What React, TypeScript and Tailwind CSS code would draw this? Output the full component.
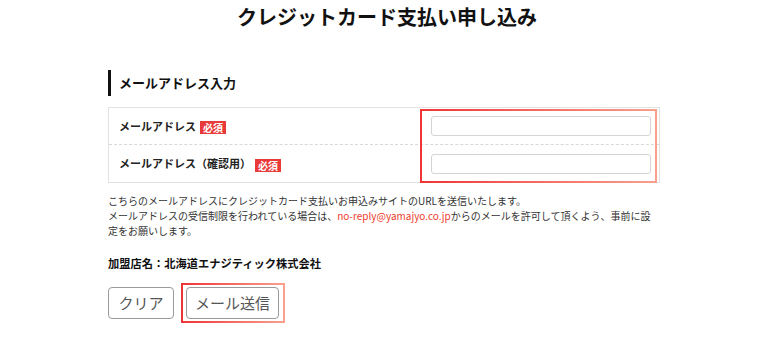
import React from 'react';

const Badge: React.FC = () => (
    <span className="inline-block ml-[4px] bg-[#e83a3a] text-white text-[10px] font-bold leading-[13px] px-[3px] align-middle">必須</span>
);

export default function App() {
    return (
        <div className="w-[774px] h-[351px] bg-white text-[#222] font-['Noto_Sans_CJK_JP','Noto_Sans',sans-serif]">
            <h1 className="pt-[4px] text-center text-[20px] font-bold leading-[26px] text-[#111]">
                クレジットカード支払い申し込み
            </h1>

            <div className="ml-[108px] w-[552px] mt-[40px]">
                <h2 className="border-l-[3px] border-[#111] pl-[8px] text-[13px] font-bold leading-[26px] text-[#111]">
                    メールアドレス入力
                </h2>

                <div className="relative mt-[11px] border border-[#e2e2e2]">
                    <div className="flex h-[37px] items-center border-b border-dashed border-[#d8d8d8]">
                        <div className="w-[312px] pl-[10px] text-[11px] font-bold">
                            メールアドレス<Badge />
                        </div>
                        <div className="flex-1 pl-[10px] pr-[8px]">
                            <input className="block w-full h-[20px] border border-[#d4d4d4] rounded-[3px] bg-white" />
                        </div>
                    </div>
                    <div className="flex h-[37px] items-center">
                        <div className="w-[312px] pl-[10px] text-[11px] font-bold">
                            メールアドレス（確認用）<Badge />
                        </div>
                        <div className="flex-1 pl-[10px] pr-[8px]">
                            <input className="block w-full h-[20px] border border-[#d4d4d4] rounded-[3px] bg-white" />
                        </div>
                    </div>
                    <div className="pointer-events-none absolute left-[311px] top-[1px] right-[2px] bottom-[-1px] border-2 [border-image:linear-gradient(to_right,#ef3535,#f9a08c)_1]" />
                </div>

                <p className="mt-[10px] text-[10px] leading-[15px] text-[#333]">
                    こちらのメールアドレスにクレジットカード支払いお申込みサイトのURLを送信いたします。<br />
                    メールアドレスの受信制限を行われている場合は、<span className="text-[#ef3b2c]">no-reply@yamajyo.co.jp</span>からのメールを許可して頂くよう、事前に設定をお願いします。
                </p>

                <p className="mt-[17px] text-[11.25px] font-bold leading-[16px] text-[#111]">
                    加盟店名：北海道エナジティック株式会社
                </p>

                <div className="mt-[16px] flex gap-[12px]">
                    <button className="h-[32px] w-[66px] border border-[#9a9a9a] rounded-[4px] bg-white text-[15px] text-[#555]">
                        クリア
                    </button>
                    <div className="relative">
                        <button className="h-[32px] w-[93px] border border-[#9a9a9a] rounded-[4px] bg-white text-[15px] text-[#555]">
                            メール送信
                        </button>
                        <div className="pointer-events-none absolute -left-[5px] -right-[6px] -top-[4px] -bottom-[4px] border-2 [border-image:linear-gradient(to_right,#ef3535,#f9a08c)_1]" />
                    </div>
                </div>
            </div>
        </div>
    );
}
